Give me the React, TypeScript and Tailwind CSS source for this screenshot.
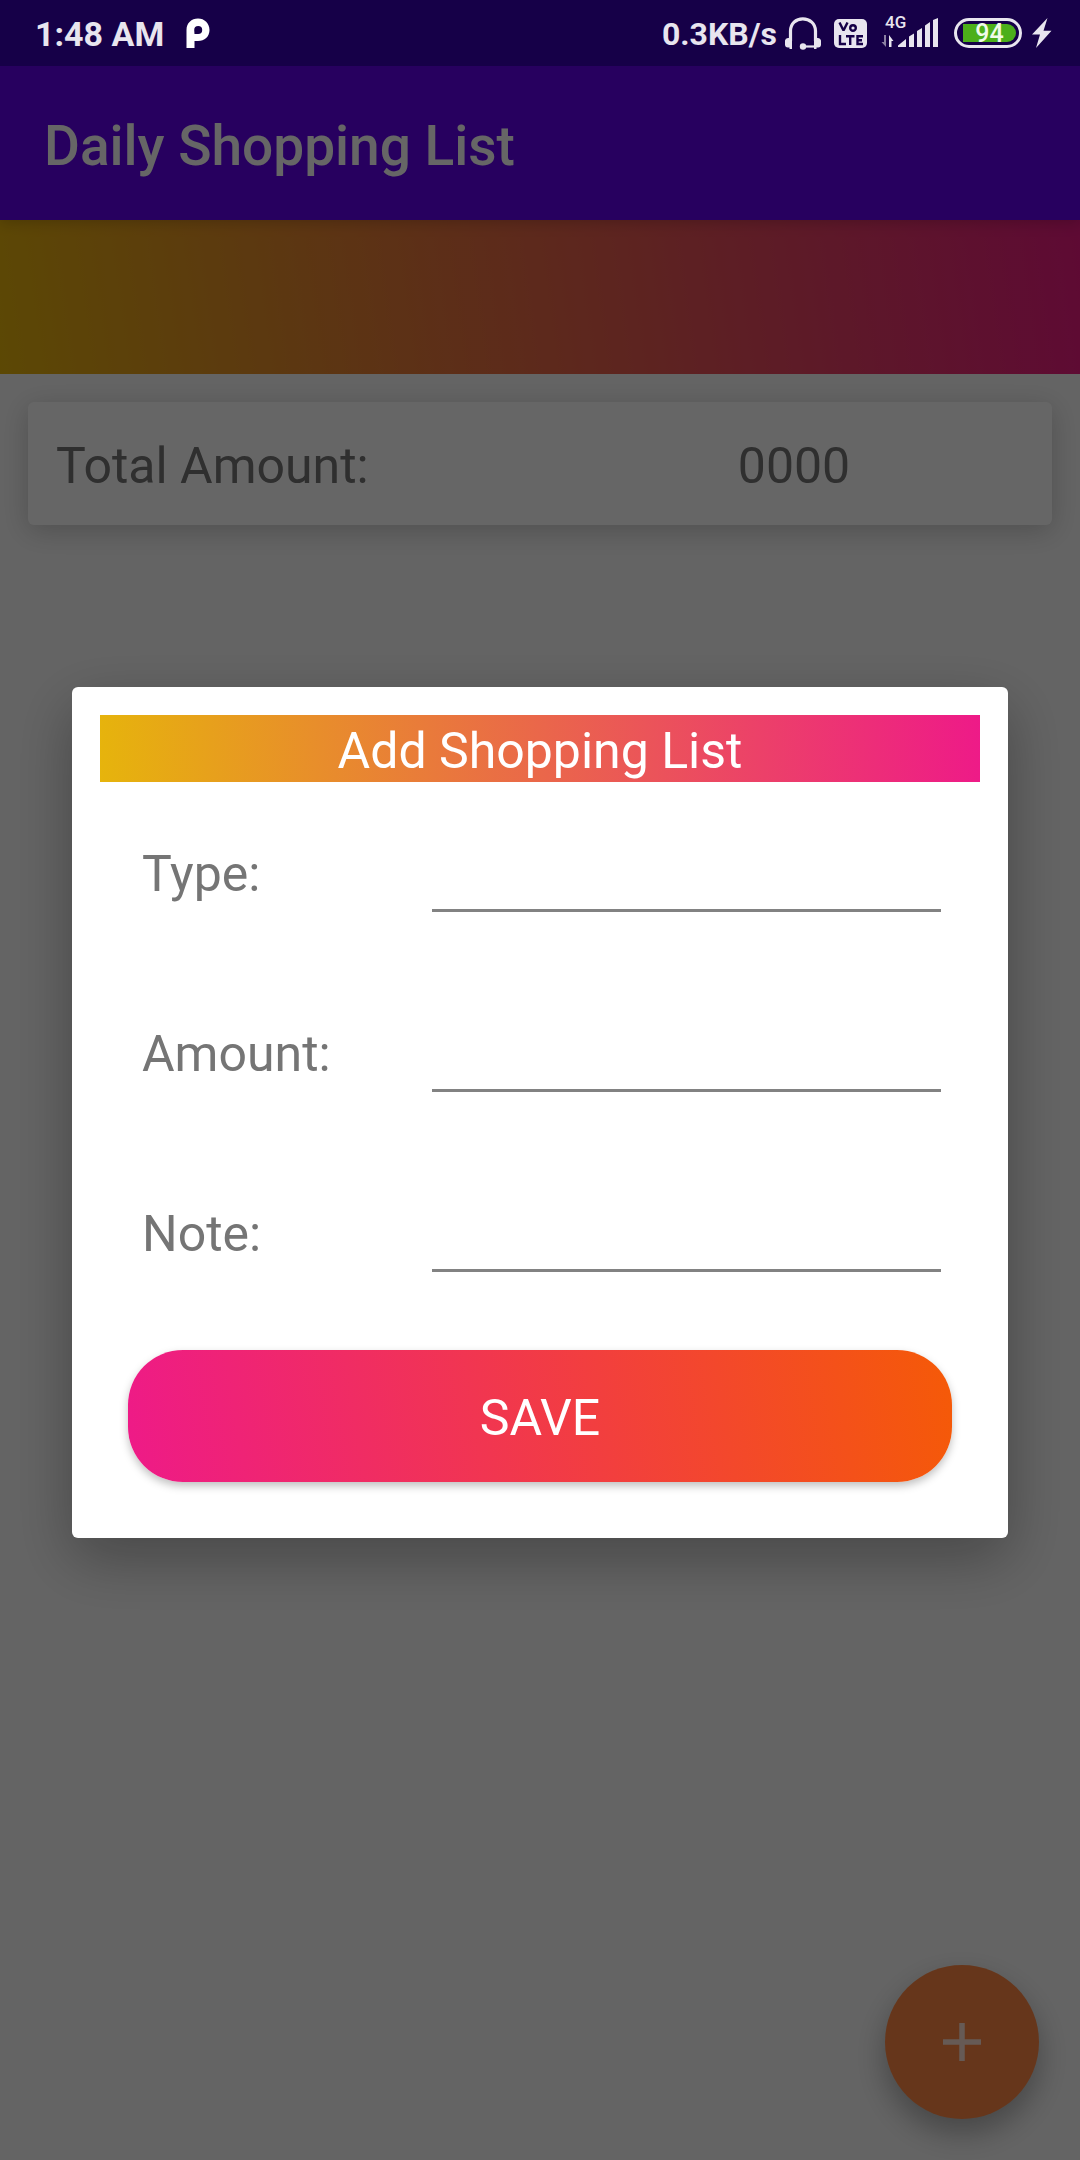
import type { ReactNode } from "react";

function ParkingIcon() {
  return (
    <svg width="24" height="30" viewBox="0 0 24 30" aria-hidden="true">
      <path
        fill="#ffffff"
        fillRule="evenodd"
        d="M0.5 30V12C0.5 5.2 5.5 0.5 12 0.5S23.5 5.4 23.5 12S18.5 23 12 23H8.5V30ZM8.5 16H12.2A4 4 0 1 0 8.2 12Z"
      />
    </svg>
  );
}

function HeadsetIcon() {
  return (
    <svg width="36" height="33" viewBox="0 0 36 33" aria-hidden="true">
      <path d="M5.5 24V14C5.5 6.5 11 1.8 17.8 1.8S30.5 6.5 30.5 14V24" fill="none" stroke="#e8e5ef" strokeWidth="3.2" />
      <path d="M7 21v11H4.5V30.5H3A3 3 0 0 1 0 27.5V23.5A3 3 0 0 1 3 21ZM29 21v11h2.5V30.5H33A3 3 0 0 0 36 27.5V23.5A3 3 0 0 0 33 21Z" fill="#e8e5ef" />
      <path d="M18 29.5H30" stroke="#e8e5ef" strokeWidth="2.2" />
      <circle cx="18" cy="29.5" r="3.2" fill="#e8e5ef" />
    </svg>
  );
}

function VolteIcon() {
  return (
    <svg width="33" height="29" viewBox="0 0 33 29" aria-hidden="true">
      <rect width="33" height="29" rx="5" fill="#e8e5ef" />
      <g fill="none" stroke="#160048" strokeWidth="2.4">
        <path d="M5.5 3.5L9.5 11.5L13.5 3.500" strokeLinejoin="bevel" />
        <circle cx="19" cy="9" r="2.8" />
        <path d="M6 16V25H12M12 17.2H20.5M16.2 17.2V26M29 17.2H23.5V25H29M23.5 21.2H28" />
      </g>
    </svg>
  );
}

function SignalIcon() {
  return (
    <span className="relative block">
      <svg width="57" height="30" viewBox="0 0 57 30" aria-hidden="true">
        <g fill="#e8e5ef">
          <path d="M17 29V27.5L25 21V29ZM28 29V18.5L33 15.5V29ZM36 29V13L41 10V29ZM44 29V7.5L49 4V29ZM52 29V2L57 0V29Z" />
          <path d="M8 29V17L12.5 23H10.5V29Z" />
        </g>
        <path d="M5 17V29L0.500 24H3V17Z" fill="#8b80a3" />
      </svg>
      <span className="absolute -top-1 left-1 text-[17px] leading-4 font-medium">4G</span>
    </span>
  );
}

function BatteryIcon() {
  return (
    <span className="flex h-[30px] w-[68px] items-center rounded-full border-3 border-[#e8e5ef] p-[3px]">
      <span className="ml-[3px] flex h-[18px] w-full items-center justify-center rounded-l-xs rounded-r-full bg-[#4caf1a] text-[25px] leading-none font-medium text-[#f0fbe9]">
        94
      </span>
    </span>
  );
}

function BoltIcon() {
  return (
    <svg width="20" height="30" viewBox="0 0 20 30" aria-hidden="true">
      <path d="M15.5 0L0 16.5H8L4 30L19.5 12.8H11.5Z" fill="#e8e5ef" />
    </svg>
  );
}

function StatusBar() {
  return (
    <div className="relative z-20 flex h-[66px] items-center justify-between bg-[#160048] pr-7 pl-[35px] text-[#e8e5ef]">
      <div className="flex items-center gap-[22px]">
        <span className="pt-0.5 text-[34px] leading-10 font-bold">1:48 AM</span>
        <ParkingIcon />
      </div>
      <div className="flex items-center">
        <span className="mr-2 pt-0.5 text-[32px] leading-10 font-bold">0.3KB/s</span>
        <HeadsetIcon />
        <span className="ml-[13px]">
          <VolteIcon />
        </span>
        <span className="ml-[14px]">
          <SignalIcon />
        </span>
        <span className="ml-4">
          <BatteryIcon />
        </span>
        <span className="ml-[10px]">
          <BoltIcon />
        </span>
      </div>
    </div>
  );
}

function Field({ id, children }: { id: string; children: ReactNode }) {
  return (
    <div className="flex items-start pr-[11px] pl-[14px]">
      <label htmlFor={id} className="w-[290px] shrink-0 pt-0.5 text-[50px] leading-[67px] text-[#757575]">
        {children}
      </label>
      <input
        id={id}
        type="text"
        className="h-[73px] min-w-0 flex-1 border-b-3 border-[#828282] bg-transparent text-[50px] text-[#212121] outline-none"
      />
    </div>
  );
}

function AddDialog() {
  return (
    <div className="fixed inset-0 z-10 flex items-center bg-black/60 px-[72px] pt-[65px]">
      <form
        role="dialog"
        aria-labelledby="dialog-title"
        className="w-full rounded-[6px] bg-white px-7 pt-7 pb-14 shadow-[0_20px_60px_rgba(0,0,0,0.3)]"
        onSubmit={(e) => e.preventDefault()}
      >
        <h2
          id="dialog-title"
          className="bg-[linear-gradient(86deg,#e6b40c,#ee1a88)] pt-1.5 text-center text-[50px] leading-[61px] text-white"
        >
          Add Shopping List
        </h2>
        <div className="mt-[57px] flex flex-col gap-[107px] px-7">
          <Field id="type">Type:</Field>
          <Field id="amount">Amount:</Field>
          <Field id="note">Note:</Field>
        </div>
        <div className="mt-[78px] px-7">
          <button
            type="submit"
            className="h-[132px] w-full rounded-[55px] bg-[linear-gradient(81deg,#ee1a88,#f55a07)] pt-1 text-[50px] text-white shadow-[0_4px_8px_rgba(0,0,0,0.25)]"
          >
            SAVE
          </button>
        </div>
      </form>
    </div>
  );
}

export default function App() {
  return (
    <div className="flex min-h-screen flex-col bg-[#fafafa] font-[Roboto,sans-serif]">
      <StatusBar />
      <header className="relative flex h-[154px] items-center bg-[#6200ee] px-11 pt-1.5 shadow-[0_2px_14px_rgba(0,0,0,0.2)]">
        <h1 className="text-[55px] leading-16 font-medium text-white">Daily Shopping List</h1>
      </header>
      <div className="h-[154px] bg-[linear-gradient(82deg,#e6b40c,#ea1a82)]" />
      <main className="p-7">
        <section className="grid h-[123px] grid-cols-2 items-center gap-12 rounded-[6px] bg-white px-7 pt-1.5 text-[50px] leading-[67px] text-[#757575] shadow-[0_6px_28px_rgba(0,0,0,0.2)]">
          <span>Total Amount:</span>
          <span className="text-center">0000</span>
        </section>
      </main>
      <button
        type="button"
        aria-label="Add item"
        className="fixed right-[41px] bottom-[41px] flex size-[154px] items-center justify-center rounded-full bg-[#ff8844] shadow-[0_14px_30px_rgba(0,0,0,0.3)]"
      >
        <svg width="38" height="38" viewBox="0 0 38 38" aria-hidden="true">
          <path d="M19 0V38M0 19H38" stroke="#ffe0d4" strokeWidth="5.5" />
        </svg>
      </button>
      <AddDialog />
    </div>
  );
}
